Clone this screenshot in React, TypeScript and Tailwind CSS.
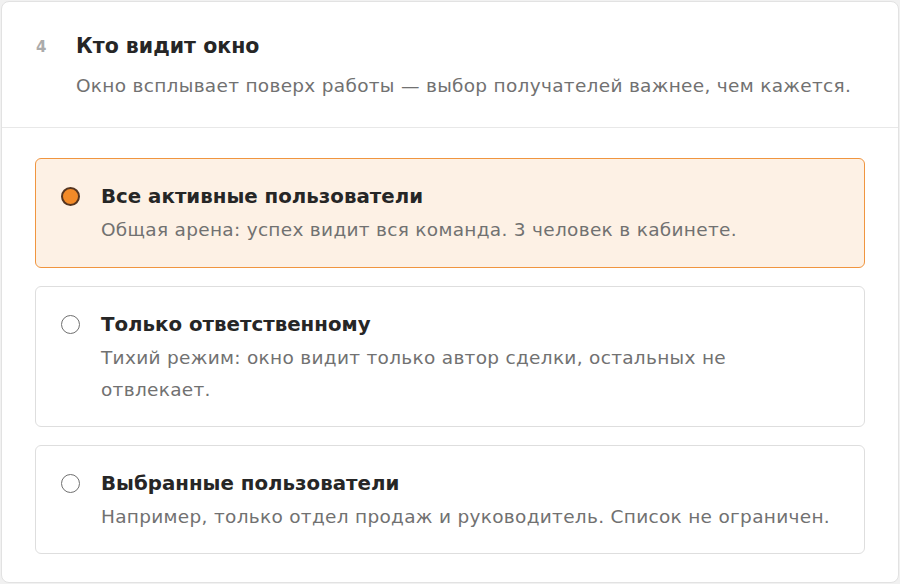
import React, { useState } from 'react';

type Option = {
  id: string;
  title: string;
  description: string;
};

const options: Option[] = [
  {
    id: 'all',
    title: 'Все активные пользователи',
    description: 'Общая арена: успех видит вся команда. 3 человек в кабинете.',
  },
  {
    id: 'owner',
    title: 'Только ответственному',
    description: 'Тихий режим: окно видит только автор сделки, остальных не отвлекает.',
  },
  {
    id: 'selected',
    title: 'Выбранные пользователи',
    description: 'Например, только отдел продаж и руководитель. Список не ограничен.',
  },
];

export default function App() {
  const [value, setValue] = useState('all');

  return (
    <div className="min-h-[584px] bg-[#f1f1f1] p-px font-['DejaVu_Sans','Noto_Sans',sans-serif]">
      <div className="rounded-lg border border-[#e2e2e2] bg-white">
        <div className="flex pl-[34px] pr-8 pt-[30px] pb-[27px]">
          <span className="w-10 pt-[4px] text-[15px] font-semibold text-[#ababab]">4</span>
          <div>
            <h2 className="text-[20.5px] leading-7 font-semibold text-[#262626]">Кто видит окно</h2>
            <p className="mt-3 text-[18.5px] leading-7 tracking-[0.3px] text-[#717171]">
              Окно всплывает поверх работы — выбор получателей важнее, чем кажется.
            </p>
          </div>
        </div>

        <div className="flex flex-col gap-[18px] border-t border-[#e8e8e8] px-[33px] pt-[30px] pb-[28px]">
          {options.map((o) => {
            const active = value === o.id;
            return (
              <button
                key={o.id}
                onClick={() => setValue(o.id)}
                className={
                  active
                    ? 'flex items-start gap-[21px] rounded-md border border-[#f0953f] bg-[#fdf1e5] pl-[25px] pr-8 pt-[24px] pb-[21px] text-left'
                    : 'flex items-start gap-[21px] rounded-md border border-[#dedede] bg-white pl-[25px] pr-8 pt-[24px] pb-[20px] text-left'
                }
              >
                <span
                  className={
                    active
                      ? 'mt-[3.5px] h-[19px] w-[19px] shrink-0 rounded-full border-[2.5px] border-[#553520] bg-[#f28a28]'
                      : 'mt-[3.5px] h-[19px] w-[19px] shrink-0 rounded-full border-[1.5px] border-[#707070] bg-white'
                  }
                />
                <span className="flex flex-col">
                  <span className="text-[19.8px] leading-7 font-semibold text-[#262626]">{o.title}</span>
                  <span className="mt-[3px] text-[18.5px] leading-8 tracking-[0.3px] text-[#717171]">
                    {o.description}
                  </span>
                </span>
              </button>
            );
          })}
        </div>
      </div>
    </div>
  );
}
